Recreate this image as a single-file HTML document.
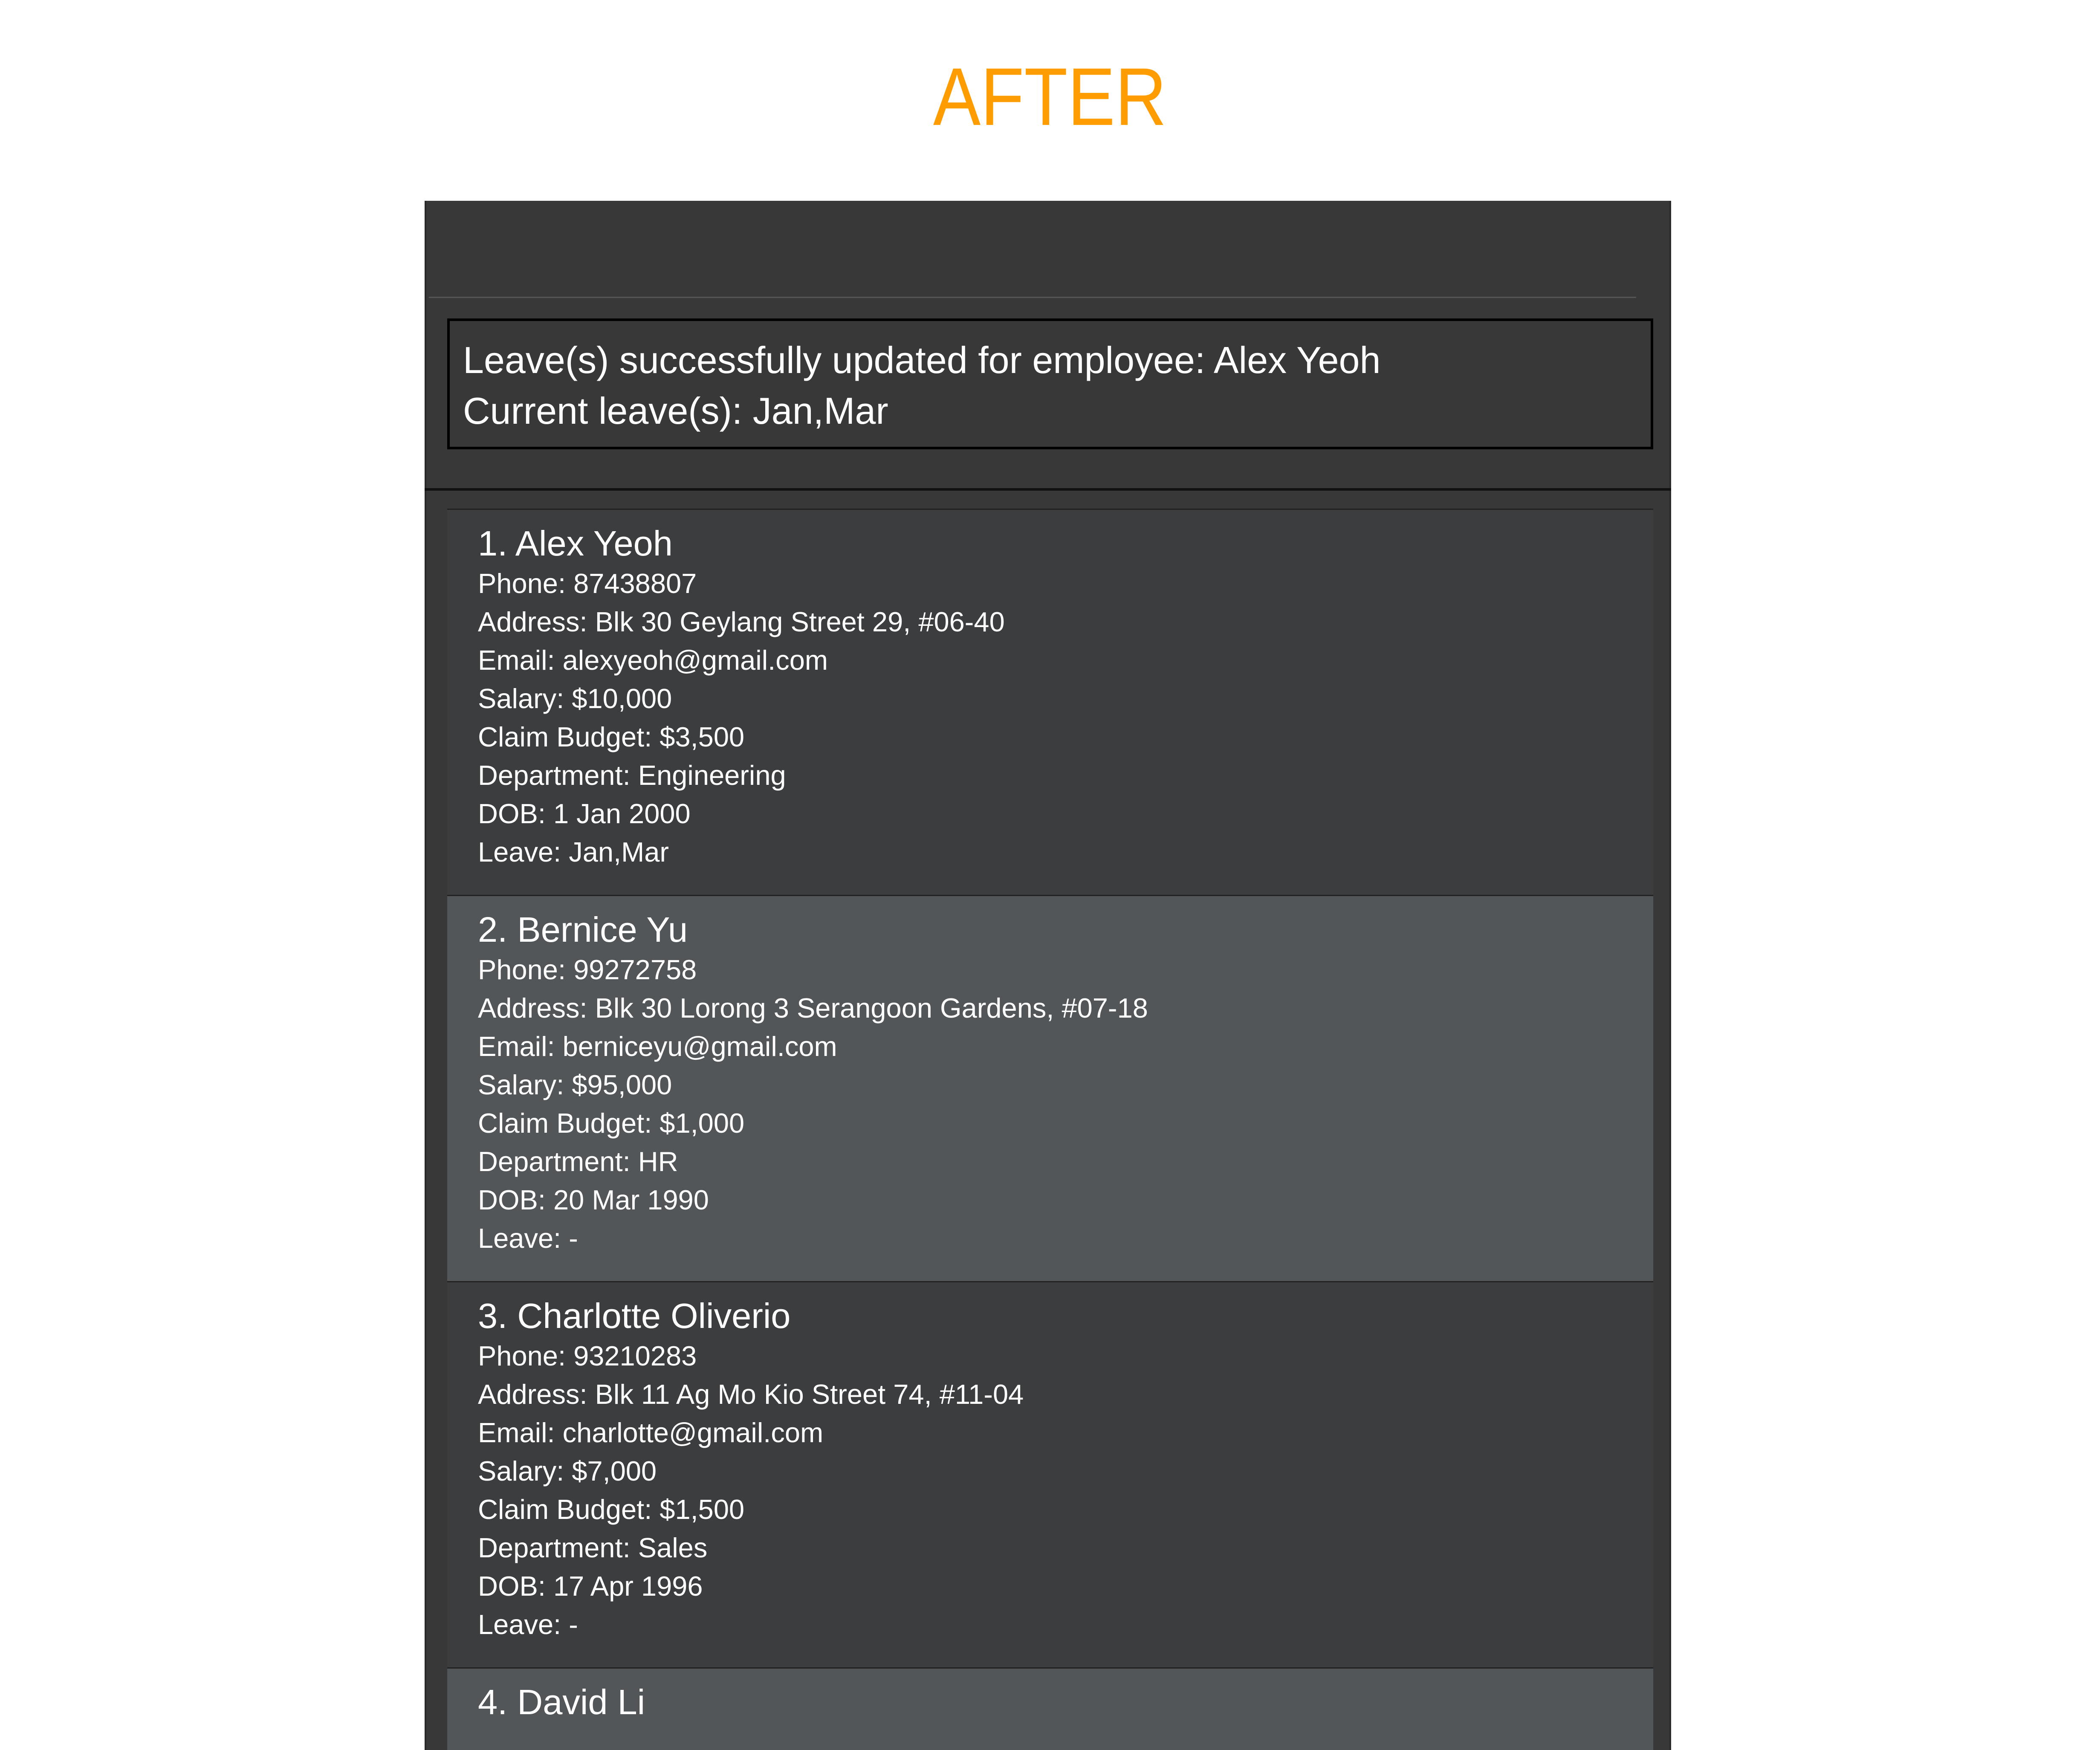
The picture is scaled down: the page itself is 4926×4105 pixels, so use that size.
<!DOCTYPE html>
<html><head><meta charset="utf-8"><style>
html,body{margin:0;padding:0;background:#fff;width:4926px;height:4105px;overflow:hidden;}
#wrap{width:4926px;height:4105px;position:relative;overflow:hidden;font-family:"Liberation Sans",sans-serif;}
.title{position:absolute;left:0;width:4926px;top:117px;text-align:center;color:#ff9d00;font-size:192px;line-height:220px;}
.title span{display:inline-block;transform:scaleX(0.87);}
.panel{position:absolute;left:996px;top:471px;width:2916px;height:3634px;background:#383838;border-left:4px solid #2a2a2a;border-right:4px solid #2a2a2a;}
.sep{position:absolute;left:1006px;top:696px;width:2832px;height:3px;background:#555;}
.result{position:absolute;left:1049px;top:747px;width:2817px;height:295px;border:6px solid #000;background:#383838;color:#fff;}
.result div{position:absolute;left:31px;font-size:88px;line-height:119px;white-space:nowrap;}
.hline{position:absolute;left:996px;top:1145px;width:2924px;height:6px;background:#111;}
.card{position:absolute;left:1049px;width:2829px;height:906px;border-top:3px solid #222;color:#fff;}
.c1{background:#3c3d3f}.c2{background:#525659}
.card .n{position:absolute;left:72px;top:30px;font-size:83px;line-height:97px;white-space:nowrap;}
.card .d{position:absolute;left:72px;top:128px;font-size:65px;line-height:90px;white-space:nowrap;}
</style></head><body><div id="wrap">
<div class="title"><span>AFTER</span></div>
<div class="panel"></div>
<div class="sep"></div>
<div class="result">
<div style="top:32px">Leave(s) successfully updated for employee: Alex Yeoh</div>
<div style="top:151px">Current leave(s): Jan,Mar</div>
</div>
<div class="hline"></div>
<div class="card c1" style="top:1193px"><div class="n">1. Alex Yeoh</div><div class="d">Phone: 87438807<br>Address: Blk 30 Geylang Street 29, #06-40<br>Email: alexyeoh@gmail.com<br>Salary: $10,000<br>Claim Budget: $3,500<br>Department: Engineering<br>DOB: 1 Jan 2000<br>Leave: Jan,Mar</div></div>
<div class="card c2" style="top:2099px"><div class="n">2. Bernice Yu</div><div class="d">Phone: 99272758<br>Address: Blk 30 Lorong 3 Serangoon Gardens, #07-18<br>Email: berniceyu@gmail.com<br>Salary: $95,000<br>Claim Budget: $1,000<br>Department: HR<br>DOB: 20 Mar 1990<br>Leave: -</div></div>
<div class="card c1" style="top:3005px"><div class="n">3. Charlotte Oliverio</div><div class="d">Phone: 93210283<br>Address: Blk 11 Ag Mo Kio Street 74, #11-04<br>Email: charlotte@gmail.com<br>Salary: $7,000<br>Claim Budget: $1,500<br>Department: Sales<br>DOB: 17 Apr 1996<br>Leave: -</div></div>
<div class="card c2" style="top:3911px;height:191px"><div class="n">4. David Li</div></div>
</div></body></html>
